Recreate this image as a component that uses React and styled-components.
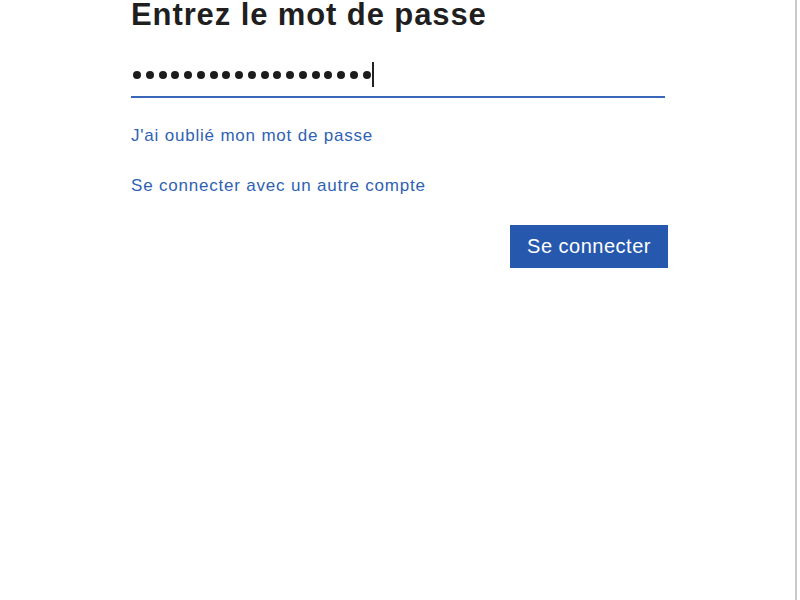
import styled, { createGlobalStyle } from 'styled-components';

const GlobalStyle = createGlobalStyle`
  html, body {
    margin: 0;
    padding: 0;
    background: #ffffff;
    font-family: "Liberation Sans", Arial, sans-serif;
    overflow: hidden;
  }
`;

const Page = styled.div`
  display: flex;
  width: 800px;
  height: 600px;
`;

const Main = styled.main`
  width: 797px;
  height: 100%;
  border-right: 2px solid #c9c9c9;
  padding-left: 131px;
  box-sizing: border-box;
`;

const Form = styled.form`
  width: 537px;
  display: flex;
  flex-direction: column;
`;

const Title = styled.h1`
  margin: 0;
  font-size: 31px;
  line-height: 29px;
  font-weight: 700;
  letter-spacing: 0.9px;
  color: #1f1f1f;
`;

const Field = styled.div`
  margin-top: 29px;
  width: calc(100% - 3px);
  height: 40px;
  padding: 0 0 5px 2px;
  box-sizing: border-box;
  display: flex;
  align-items: center;
  gap: 4.75px;
  border-bottom: 2px solid #3866b8;
`;

const Dot = styled.span`
  width: 8px;
  height: 8px;
  border-radius: 50%;
  background: #1c1c1c;
  flex-shrink: 0;
`;

const Caret = styled.span`
  width: 1.5px;
  height: 25px;
  margin-left: -3px;
  background: #222222;
`;

const Link = styled.a`
  margin-top: ${(p) => p.$gap}px;
  font-size: 17px;
  line-height: 20px;
  letter-spacing: 0.8px;
  color: #2f62b3;
  text-decoration: none;
  cursor: pointer;
`;

const Actions = styled.div`
  margin-top: 29px;
  display: flex;
  justify-content: flex-end;
`;

const Submit = styled.button`
  width: 158px;
  height: 43px;
  border: none;
  background: #2658ad;
  color: #ffffff;
  font-family: "Liberation Sans", Arial, sans-serif;
  font-size: 20px;
  letter-spacing: 0.5px;
  cursor: pointer;
`;

const PASSWORD_LENGTH = 19;

const App = () => {
  return (
    <>
      <GlobalStyle />
      <Page>
        <Main>
          <Form onSubmit={(e) => e.preventDefault()}>
            <Title>Entrez le mot de passe</Title>
            <Field>
              {Array.from({ length: PASSWORD_LENGTH }).map((_, i) => (
                <Dot key={i} />
              ))}
              <Caret />
            </Field>
            <Link $gap={28}>J'ai oublié mon mot de passe</Link>
            <Link $gap={30}>Se connecter avec un autre compte</Link>
            <Actions>
              <Submit type="submit">Se connecter</Submit>
            </Actions>
          </Form>
        </Main>
      </Page>
    </>
  );
};

export default App;
